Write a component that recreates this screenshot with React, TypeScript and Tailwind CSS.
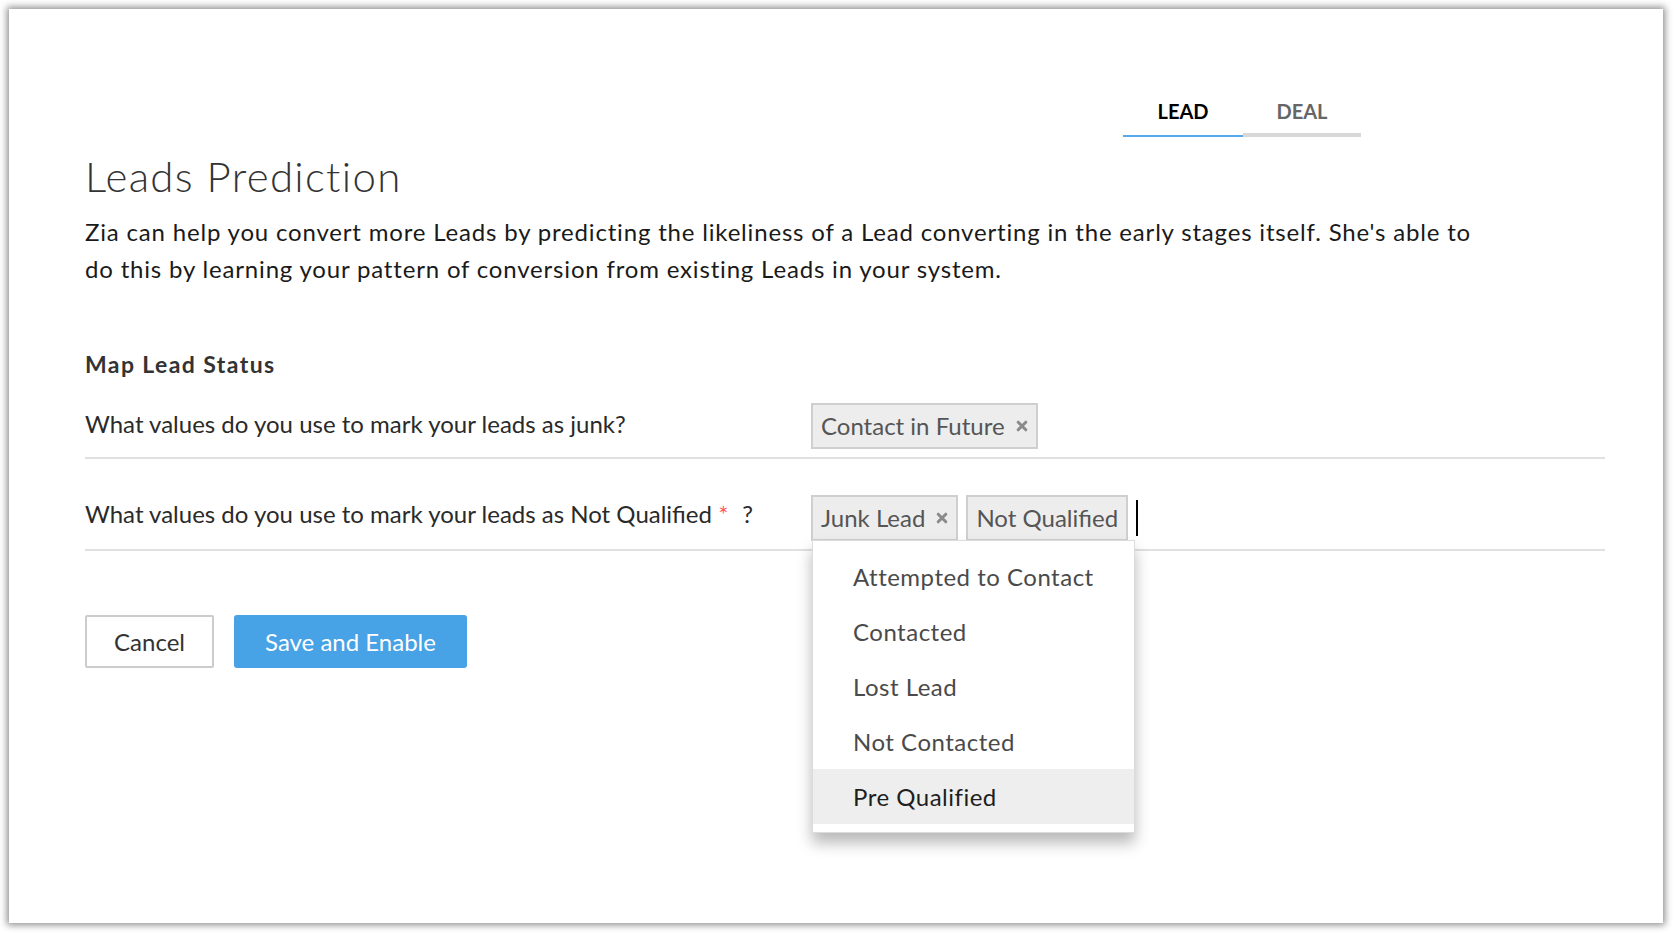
import React from 'react';

const junkValues = ['Contact in Future'];
const notQualifiedValues = ['Junk Lead', 'Not Qualified'];
const options = ['Attempted to Contact', 'Contacted', 'Lost Lead', 'Not Contacted', 'Pre Qualified'];

function CloseX() {
  return (
    <svg viewBox="0 0 12 12" className="h-[12px] w-[12px] shrink-0" fill="none">
      <path d="M2.2 2.2 L9.8 9.8 M9.8 2.2 L2.2 9.8" stroke="#8a8a8a" strokeWidth="3" strokeLinecap="round" />
    </svg>
  );
}

function Chip({ label, removable = true }: { label: string; removable?: boolean }) {
  return (
    <div className="flex h-[46px] items-center gap-[11px] border-2 border-[#cfcfcf] bg-[#ededed] px-[8px] text-[24px] leading-none text-[#555]">
      <span>{label}</span>
      {removable && <CloseX />}
    </div>
  );
}

export default function App() {
  return (
    <div className="h-[934px] w-full bg-white pl-[9px] pt-[9px]" style={{ fontFamily: 'Lato, "Open Sans", sans-serif' }}>
      <div className="flex h-[914px] w-[1654px] flex-col bg-white pl-[76px] shadow-[0_0_7px_2px_rgba(0,0,0,0.45)]">
        {/* Tabs */}
        <div className="flex items-end justify-end pr-[302px] pt-[90px]">
          <div className="flex w-[120px] justify-center border-b-2 border-[#55aaeb] pb-[12px] text-[20px] font-bold leading-[24px] text-black">
            LEAD
          </div>
          <div className="flex w-[118px] justify-center border-b-4 border-[#d8d8d8] pb-[10px] text-[20px] font-bold leading-[24px] text-[#666]">
            DEAL
          </div>
        </div>

        {/* Heading */}
        <h1 className="mt-[14px] text-[42px] font-light leading-[50px] tracking-[1.3px] text-[#333]">Leads Prediction</h1>
        <p className="mt-[12px] w-[1400px] text-[24px] leading-[37px] tracking-[0.82px] text-[#1a1a1a]">
          Zia can help you convert more Leads by predicting the likeliness of a Lead converting in the early stages itself. She's able to do this by learning your pattern of conversion from existing Leads in your system.
        </p>

        {/* Map Lead Status */}
        <div className="mt-[63px] text-[23px] font-bold leading-[28px] tracking-[1.4px] text-[#333]">Map Lead Status</div>

        <div className="mt-[25px] flex w-[1520px] items-start border-b-2 border-[#e0e0e0] pb-[8px]">
          <div className="w-[726px] pt-[7px] text-[24px] leading-[28px] text-[#2a2a2a]">
            What values do you use to mark your leads as junk?
          </div>
          <div className="flex gap-[8px]">
            {junkValues.map((v) => (
              <Chip key={v} label={v} />
            ))}
          </div>
        </div>

        <div className="flex w-[1520px] items-start border-b-2 border-[#e0e0e0] pb-[8px] pt-[36px]">
          <div className="w-[726px] pt-[5px] text-[24px] leading-[28px] text-[#2a2a2a]">
            What values do you use to mark your leads as Not Qualified <span className="text-[#ff5c5c]">*</span>
            <span className="ml-[14px]">?</span>
          </div>
          <div className="relative flex items-center gap-[8px]">
            <Chip label={notQualifiedValues[0]} />
            <Chip label={notQualifiedValues[1]} removable={false} />
            <div className="h-[36px] w-[2px] bg-black" />

            {/* Dropdown */}
            <ul className="absolute left-[1px] top-[45px] z-10 w-[323px] border border-[#dcdcdc] bg-white py-[8px] shadow-[0_10px_14px_rgba(0,0,0,0.28)]">
              {options.map((o, i) => (
                <li
                  key={o}
                  className={`h-[55px] pl-[40px] text-[24px] leading-[55px] tracking-[0.5px] ${
                    i === options.length - 1 ? 'bg-[#eeeeee] text-[#1e1e1e]' : 'text-[#4a4a4a]'
                  }`}
                >
                  {o}
                </li>
              ))}
            </ul>
          </div>
        </div>

        {/* Buttons */}
        <div className="mt-[64px] flex gap-[20px]">
          <button className="h-[53px] w-[129px] rounded-[2px] border-2 border-[#cccccc] bg-white text-[24px] text-[#333]">
            Cancel
          </button>
          <button className="h-[53px] w-[233px] rounded-[3px] bg-[#47a2e6] text-[24px] text-white">
            Save and Enable
          </button>
        </div>
      </div>
    </div>
  );
}
